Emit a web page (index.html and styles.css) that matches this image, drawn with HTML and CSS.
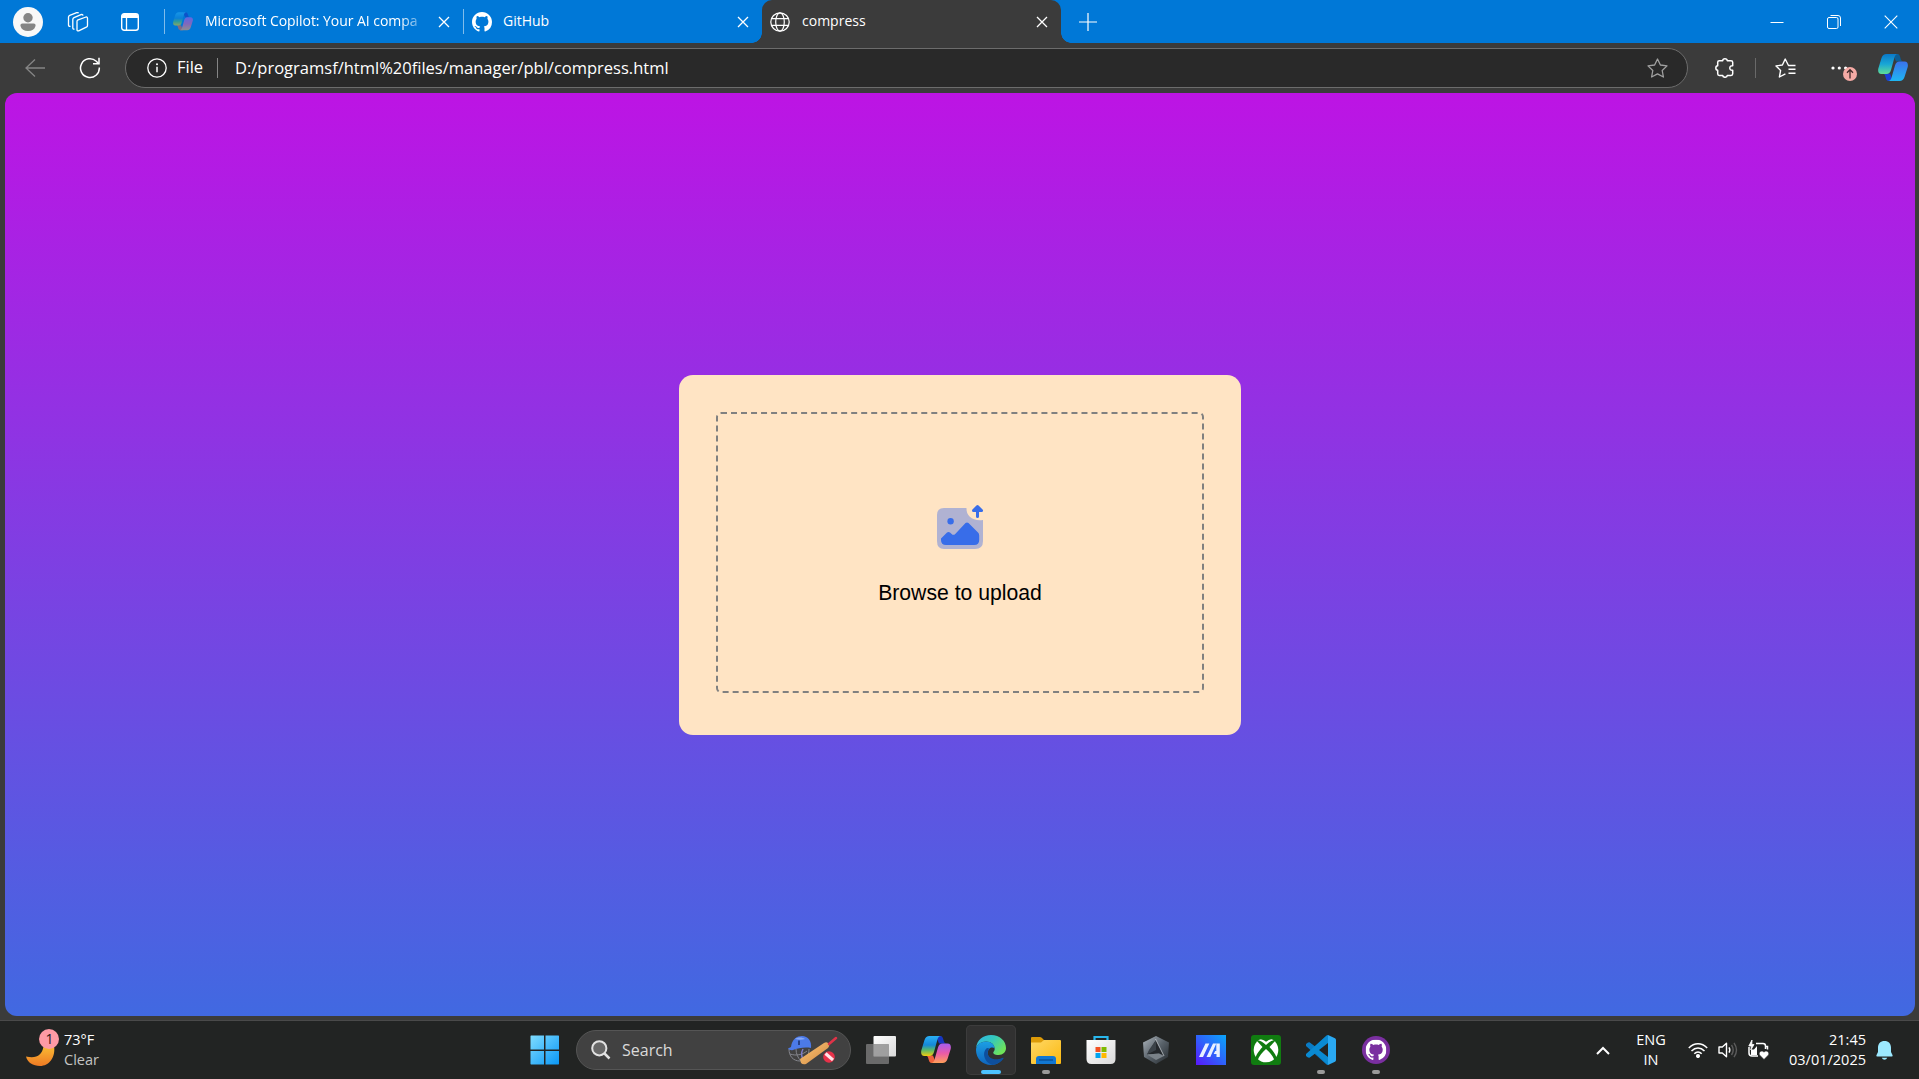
FILE: index.html
```
<!DOCTYPE html>
<html lang="en">
<head>
<meta charset="utf-8">
<title>compress</title>
<link rel="stylesheet" href="styles.css">
</head>
<body>
<svg class="defs" width="0" height="0" aria-hidden="true">
  <defs>
    <linearGradient id="cpA" x1="0" y1="0" x2="0" y2="1"><stop offset="0" stop-color="#2ab0f5"/><stop offset=".45" stop-color="#1588d8"/><stop offset=".7" stop-color="#58b96a"/><stop offset="1" stop-color="#f3cd0d"/></linearGradient>
    <linearGradient id="cpB" x1="0" y1="0" x2="0" y2="1"><stop offset="0" stop-color="#a65cf0"/><stop offset=".5" stop-color="#ea5aa8"/><stop offset="1" stop-color="#ff9f58"/></linearGradient>
    <linearGradient id="cbA" x1="0" y1="0" x2="0" y2="1"><stop offset="0" stop-color="#0a78c8"/><stop offset=".5" stop-color="#18a6d6"/><stop offset="1" stop-color="#5fdc97"/></linearGradient>
    <linearGradient id="cbB" x1="0" y1="0" x2="0" y2="1"><stop offset="0" stop-color="#3a72ee"/><stop offset="1" stop-color="#1fb6f2"/></linearGradient>
    <linearGradient id="win" x1="0" y1="0" x2="1" y2="1"><stop offset="0" stop-color="#7fdcff"/><stop offset="1" stop-color="#0a97f5"/></linearGradient>
    <linearGradient id="moon" x1="0" y1="0" x2="0" y2="1"><stop offset="0" stop-color="#f9bd34"/><stop offset="1" stop-color="#ee7a24"/></linearGradient>
    <linearGradient id="edA" x1="0" y1="0" x2="1" y2=".6"><stop offset="0" stop-color="#2fb4ec"/><stop offset=".5" stop-color="#34c8bd"/><stop offset="1" stop-color="#6fe35a"/></linearGradient>
    <linearGradient id="edB" x1="0" y1="0" x2="0" y2="1"><stop offset="0" stop-color="#1c9fe4"/><stop offset="1" stop-color="#0f64bd"/></linearGradient>
    <linearGradient id="fold" x1="0" y1="0" x2="1" y2="1"><stop offset="0" stop-color="#ffd866"/><stop offset="1" stop-color="#fbb910"/></linearGradient>
    <linearGradient id="asus" x1="0" y1="1" x2="1" y2="0"><stop offset="0" stop-color="#5a16fb"/><stop offset=".5" stop-color="#2e63fb"/><stop offset="1" stop-color="#0aa6fa"/></linearGradient>
    <linearGradient id="steel" x1="0" y1="0" x2="1" y2="1"><stop offset="0" stop-color="#aeb6bd"/><stop offset=".5" stop-color="#59626a"/><stop offset="1" stop-color="#23282c"/></linearGradient>
    <linearGradient id="white" x1="0" y1="0" x2="1" y2="1"><stop offset="0" stop-color="#fff"/><stop offset="1" stop-color="#d9d9d9"/></linearGradient>
    <linearGradient id="bat" x1="0" y1="0" x2="1" y2="1"><stop offset="0" stop-color="#ffc878"/><stop offset="1" stop-color="#cf8740"/></linearGradient>
    <symbol id="octocat" viewBox="0 0 16 16"><path d="M8 0C3.58 0 0 3.58 0 8c0 3.54 2.29 6.53 5.47 7.59.4.07.55-.17.55-.38 0-.19-.01-.82-.01-1.49-2.01.37-2.53-.49-2.69-.94-.09-.23-.48-.94-.82-1.13-.28-.15-.68-.52-.01-.53.63-.01 1.08.58 1.23.82.72 1.21 1.87.87 2.33.66.07-.52.28-.87.51-1.07-1.78-.2-3.64-.89-3.64-3.95 0-.87.31-1.59.82-2.15-.08-.2-.36-1.02.08-2.12 0 0 .67-.21 2.2.82.64-.18 1.32-.27 2-.27s1.36.09 2 .27c1.53-1.04 2.2-.82 2.2-.82.44 1.1.16 1.92.08 2.12.51.56.82 1.27.82 2.15 0 3.07-1.87 3.75-3.65 3.95.29.25.54.73.54 1.48 0 1.07-.01 1.93-.01 2.2 0 .21.15.46.55.38A8.01 8.01 0 0 0 16 8c0-4.42-3.58-8-8-8z"/></symbol>
    <symbol id="copilot" viewBox="0 0 30 28">
      <path d="M15 0h4c2.600 0 3 2 3.800 5 .4 1.600 1 2.500 3 2.500H18z" fill="#1636c0"/>
      <path d="M15 27h-4c-2.500 0-3-2-3.800-5-.4-1.500-1-2.500-3-2.500H12z" fill="#f0623c"/>
      <path d="M8.500 0H20c-2 0-3 1.500-3.700 4L13 16c-.8 2.800-2.200 4-4.500 4H3.500C.5 20-.3 17.500.3 14.500L3.500 4C4.400 1.300 6 0 8.500 0z" fill="url(#cpA)"/>
      <path d="M21.500 27H10c2 0 3-1.500 3.700-4L17 11.500c.8-2.800 2.200-4 4.500-4h5c3 0 3.800 2.500 3.200 5.500l-3.200 10c-.9 2.700-2.500 4-5 4z" fill="url(#cpB)"/>
    </symbol>
    <symbol id="copilot-blue" viewBox="0 0 30 28">
      <path d="M15 0h4c2.600 0 3 2 3.800 5 .4 1.600 1 2.500 3 2.500H18z" fill="#0c5c94"/>
      <path d="M15 27h-4c-2.500 0-3-2-3.800-5-.4-1.500-1-2.500-3-2.500H12z" fill="#1a3fd6"/>
      <path d="M8.500 0H20c-2 0-3 1.500-3.700 4L13 16c-.8 2.800-2.200 4-4.500 4H3.500C.5 20-.3 17.500.3 14.500L3.500 4C4.400 1.300 6 0 8.500 0z" fill="url(#cbA)"/>
      <path d="M21.500 27H10c2 0 3-1.500 3.700-4L17 11.500c.8-2.800 2.200-4 4.500-4h5c3 0 3.800 2.500 3.200 5.500l-3.200 10c-.9 2.700-2.500 4-5 4z" fill="url(#cbB)"/>
    </symbol>
    <symbol id="close" viewBox="0 0 12 12"><path d="M1 1l10 10M11 1L1 11" fill="none" stroke="#fff" stroke-width="1.300"/></symbol>
  </defs>
</svg>

<header class="tabstrip">
  <div class="strip-tools">
    <svg class="avatar" width="30" height="30" viewBox="0 0 30 30"><circle cx="15" cy="15" r="15" fill="#f8f8f8"/><circle cx="15" cy="10.700" r="4.700" fill="#858585"/><path d="M9.500 16.500h11q2.500 0 2 2.500c-.8 3.300-3.500 5-7.500 5s-6.700-1.700-7.500-5q-.5-2.500 2-2.500z" fill="#858585"/></svg>
    <svg class="workspaces" width="22" height="20" viewBox="0 0 22 20" fill="none" stroke="#fff" stroke-width="1.300" stroke-linejoin="round"><path d="M10.500 8.200L19 5q1.500-.3 1.500 1.200v7.300q0 1.200-1.200 1.700l-7.600 3.600q-1.700.5-1.700-1.100V9.500q0-.9.500-1.300z"/><path d="M7.500 17.200q-1.700.2-1.700-1.400V7.500q0-1.200 1.200-1.800L14 2.600q1.700-.4 2 1"/><path d="M3.500 14.400q-2 .2-2-1.400V5q0-1.200 1.200-1.700l7-2.600q1.300-.4 1.800.6"/></svg>
    <svg class="tabmenu" width="18" height="18" viewBox="0 0 18 18"><rect x=".7" y=".7" width="16.600" height="16.600" rx="2.500" fill="none" stroke="#fff" stroke-width="1.400"/><path d="M1 5V3q0-2 2-2h12q2 0 2 2v2z" fill="#fff"/><path d="M5.500 5v12" stroke="#fff" stroke-width="1.300"/></svg>
  </div>
  <div class="tab tab-copilot">
    <svg class="dim" width="20" height="19"><use href="#copilot"/></svg>
    <span class="tab-title fade">Microsoft Copilot: Your AI compa</span>
    <svg class="x" width="12" height="12"><use href="#close"/></svg>
  </div>
  <div class="tab tab-github">
    <svg width="20" height="20" fill="#fff"><use href="#octocat"/></svg>
    <span class="tab-title">GitHub</span>
    <svg class="x" width="12" height="12"><use href="#close"/></svg>
  </div>
  <div class="tab tab-active">
    <svg width="20" height="20" viewBox="0 0 20 20" fill="none" stroke="#fff" stroke-width="1.200"><circle cx="10" cy="10" r="9.200"/><ellipse cx="10" cy="10" rx="4.300" ry="9.200"/><path d="M1.500 6.700h17M1.500 13.300h17"/></svg>
    <span class="tab-title">compress</span>
    <svg class="x" width="12" height="12"><use href="#close"/></svg>
  </div>
  <svg class="plus" width="18" height="18" viewBox="0 0 18 18"><path d="M9 0v18M0 9h18" stroke="#fff" stroke-width="1.200"/></svg>
  <div class="window-buttons">
    <svg width="14" height="14" viewBox="0 0 14 14"><path d="M.5 7.500h13" stroke="#fff"/></svg>
    <svg width="14" height="14" viewBox="0 0 14 14" fill="none" stroke="#fff"><rect x=".5" y="2.500" width="10.500" height="11" rx="1.500"/><path d="M3.500.5H11q2.500 0 2.500 2.500v8"/></svg>
    <svg width="14" height="14" viewBox="0 0 14 14"><path d="M.7.700l12.600 12.600M13.300.700L.7 13.300" stroke="#fff" stroke-width="1.100"/></svg>
  </div>
</header>

<nav class="toolbar">
  <svg class="back" width="20" height="18" viewBox="0 0 20 18" fill="none" stroke="#858585" stroke-width="1.300"><path d="M10 .5L1 9l9 8.500M1 9h19"/></svg>
  <svg class="reload" width="22" height="22" viewBox="0 0 22 22" fill="none" stroke="#fff" stroke-width="1.500"><path d="M20.300 10.500A9.400 9.400 0 1 1 17.300 4.200L19.500 6.500"/><path d="M20 .8v6h-6"/></svg>
  <div class="address">
    <svg class="info" width="20" height="20" viewBox="0 0 20 20"><circle cx="10" cy="10" r="9.200" fill="none" stroke="#fff" stroke-width="1.300"/><path d="M10 8.800v5.500" stroke="#fff" stroke-width="1.500"/><circle cx="10" cy="6.200" r="1" fill="#fff"/></svg>
    <span class="scheme">File</span>
    <span class="url">D:/programsf/html%20files/manager/pbl/compress.html</span>
    <svg class="star" width="21" height="20" viewBox="0 0 21 20" fill="none" stroke="#a0a0a0" stroke-width="1.300" stroke-linejoin="round"><path d="M10.500 1l2.900 6 6.600.9-4.800 4.600 1.200 6.500-5.900-3.100L4.600 19l1.200-6.500L1 7.900 7.600 7z"/></svg>
  </div>
  <svg class="puzzle" width="20" height="20" viewBox="0 0 20 20" fill="none" stroke="#fff" stroke-width="1.500" stroke-linejoin="round"><path d="M4.300 2.700h3.400C7.800.2 12 .2 12.300 2.700H16q1.700 0 1.700 1.600v3.500c-3.800-.7-4 5.100 0 4.500v3.500q0 1.600-1.700 1.600h-3.700c-.3 2.500-4.500 2.500-4.600 0H4.300q-1.600 0-1.600-1.600v-3.500c-2.500-.2-2.500-4.300 0-4.500V4.300q0-1.600 1.600-1.600z"/></svg>
  <svg class="favorites" width="21" height="20" viewBox="0 0 21 20" fill="none" stroke="#fff" stroke-width="1.400" stroke-linejoin="round"><path d="M20.500 7.500h-7L10.200 1 7.400 7 1 7.900l4.600 4.500L4.400 19l6-3.200M13.500 11.200h7M13.500 15.200h7"/></svg>
  <div class="more">
    <svg width="18" height="4" viewBox="0 0 18 4" fill="#fff"><circle cx="2" cy="2" r="1.600"/><circle cx="8.300" cy="2" r="1.600"/><circle cx="14.600" cy="2" r="1.600"/></svg>
    <svg class="update" width="14" height="14" viewBox="0 0 14 14"><circle cx="7" cy="7" r="7" fill="#f5aaa5"/><path d="M7 11.500V3M4 5.700L7 2.700l3 3" fill="none" stroke="#402a2a" stroke-width="1.300"/></svg>
  </div>
  <svg class="sidebar-copilot" width="30" height="28"><use href="#copilot-blue"/></svg>
</nav>

<main class="page">
  <section class="card">
    <div class="dropzone">
      <svg width="48" height="46" viewBox="0 0 48 46">
        <path d="M8 4h22.500C30 12 37 17.500 47 16v21q0 8-8 8H8q-7 0-7-8V11q0-7 7-7z" fill="#b0b2d2"/>
        <circle cx="14.600" cy="17.300" r="3.200" fill="#386de9"/>
        <path d="M5 34.500l6-6q1.500-1 3 0l2.500 2.200q1.500.5 2.500-.5L29.500 19q1.500-1.200 3 0L42 28.500q1.200 1.200 1.200 3V36q0 5-5 5H10q-5 0-5-5z" fill="#386de9"/>
        <path d="M41.500 12.500V4M37.500 6.600l4-4 4 4z" fill="#386de9" stroke="#386de9" stroke-width="3" stroke-linejoin="round" stroke-linecap="round"/>
      </svg>
      <p class="prompt">Browse to upload</p>
    </div>
  </section>
</main>

<footer class="taskbar">
  <div class="weather">
    <svg width="34" height="42" viewBox="0 -2 34 42"><path d="M0 25.500c10 2.500 16-1 17.500-10l10.500-1c2 12-5 20.500-14 20.500C7 35 1.500 31.500 0 25.500z" fill="url(#moon)"/><circle cx="23" cy="8" r="10" fill="#ff9aa5"/><text x="23.500" y="13" class="badge-count">1</text></svg>
    <div class="weather-text"><span>73°F</span><span class="muted">Clear</span></div>
  </div>
  <div class="dock">
    <svg class="start" width="30" height="30" viewBox="0 0 30 30" fill="url(#win)"><path d="M1 .5h13v14H.5V1zM15.500.5h13l.5.500v13.500H15.500zM.5 16H14v13.500H1l-.5-.5zM15.500 16H29v13l-.5.500h-13z"/></svg>
    <div class="search">
      <svg width="20" height="20" viewBox="0 0 20 20" fill="none" stroke="#e2e2e2" stroke-width="2"><circle cx="8.300" cy="8.300" r="7.100" fill="#686868"/><path d="M13.500 13.500l5 5" stroke-width="2.500"/></svg>
      <span>Search</span>
      <svg class="cricket" width="50" height="30" viewBox="0 0 50 30"><path d="M1 14c0 7 4 12 11 12 5 0 9-4 9-12M2 19c6 2 12 1 17-3M8 14c0 5 2 9 5 12" fill="none" stroke="#84858c" stroke-width="1"/><path d="M15 14c-2 4-2 7 0 10" fill="none" stroke="#7c7cc8" stroke-width="1.500"/><path d="M0 13.500l3-1.500C4 4 9 1 14 1c6 0 10 5 9 12-6-1-13 0-18 2-2 .5-4 0-5-1.500z" fill="#4c7ae8"/><path d="M7 4c3-2 7-2 10 0-3 1-6 1-10 0z" fill="#86a8f8"/><path d="M11 5.500v4.500" stroke="#1b3270" stroke-width="1.600"/><path d="M12 24L36 8q3-2 5 1 1 2-1 4L18 29q-3 1-5-1z" fill="url(#bat)"/><path d="M41 9l7-6" stroke="#df3348" stroke-width="2.500" stroke-linecap="round"/><circle cx="41" cy="22" r="5.800" fill="#e83149"/><path d="M37.500 18.500l7.500 6.500" stroke="#ffe4e7" stroke-width="3"/></svg>
    </div>
    <div class="apps">
      <div class="app"><svg width="30" height="28" viewBox="0 0 30 28"><rect x="7.500" width="22.500" height="20.500" rx="1" fill="url(#white)"/><rect y="8" width="23" height="20" rx="1" fill="#777" opacity=".85"/><path d="M7.500 8H23v12.500H7.500z" fill="#aaa" opacity=".7"/></svg></div>
      <div class="app"><svg width="30" height="28"><use href="#copilot"/></svg></div>
      <div class="app selected"><svg width="30" height="30" viewBox="0 0 30 30"><path d="M0 13C1 5 7 0 15 0c9 0 15 6 15 13 0 4-3 7-7.500 7-4 0-6-1.500-5-3 .8-1 1.200-2 1.200-3C18.700 9.500 15 6.500 10 6.500 5 6.500 1.500 9.500 0 13z" fill="url(#edA)"/><path d="M0 15C0 10 4.500 6.500 10 6.500c5 0 8.500 3 8.700 7-2.200-2.500-7-.5-7 4.500 0 6 7 9.500 15.500 5C24.500 27.500 20 30 15 30 6.500 30 0 23.500 0 15z" fill="url(#edB)"/><path d="M11 13c-6 5-2 15 5.500 16.900C21 29.500 25 27 27.500 23.500c.3-.6 0-1-.8-.7-8 3.700-15 .2-15-4.800 0-2 .8-3.500 1.800-4.500z" fill="#0e4f9d"/></svg></div>
      <div class="app running"><svg width="30" height="28" viewBox="0 0 30 28"><path d="M0 2q0-1 1-1h8q1.500 0 2.500 1.500L13 4v4H0z" fill="#dd9b08"/><path d="M0 6.500h10L13 4h16q1 0 1 1v22q0 1-1 1H1q-1 0-1-1z" fill="url(#fold)"/><path d="M5 28v-5q0-3 3-3h14q3 0 3 3v5z" fill="#1278d2"/><path d="M8 24h14" stroke="#0a4e94" stroke-width="1.300"/></svg></div>
      <div class="app"><svg width="30" height="30" viewBox="0 0 30 30"><path d="M8.500 6V2h13v4" fill="none" stroke="#29b8ed" stroke-width="2.200"/><path d="M.5 5h29v19q0 5-5 5h-19q-5 0-5-5z" fill="url(#white)"/><path d="M9.500 12h5v5h-5z" fill="#f25022"/><path d="M15.500 12h5v5h-5z" fill="#7fba00"/><path d="M9.500 18h5v5h-5z" fill="#00a4ef"/><path d="M15.500 18h5v5h-5z" fill="#ffb900"/></svg></div>
      <div class="app"><svg width="26" height="28" viewBox="0 0 26 28"><path d="M13 0l13 6.500-1 14.500-12 7L1 21 0 6.500z" fill="url(#steel)"/><path d="M13 4l8 15.500-5-2L4 18.500z" fill="#24282c"/><path d="M13 4L6 14l-2 4.500 9-4.500z" fill="#3b4248"/><path d="M12.500 3L21 20" stroke="#c7cdd2" stroke-width=".8"/><path d="M4 18.500l12-1 5 2.500-8 4z" fill="#7a8289"/></svg></div>
      <div class="app"><svg width="30" height="30" viewBox="0 0 30 30"><path d="M0 0h30v30H0z" fill="url(#asus)"/><path d="M3 22L9.500 8.500h3.800L7 22zM10.500 22L17 8.500h3.300L14.300 22zM20.300 8.500h3.500V22h-3.300v-3h-2.800l1.500-3h1.100z" fill="#e8f0ff"/></svg></div>
      <div class="app"><svg width="30" height="30" viewBox="0 0 30 30"><rect width="30" height="30" rx="3" fill="#107c10"/><circle cx="15" cy="15" r="12.300" fill="#fff"/><path d="M7 4.500c3-.8 6 .8 8 2.300 2-1.500 5-3.100 8-2.300l-1.500-2.500h-13z" fill="#107c10"/><path d="M5.500 5.500c3-.8 6.500 1.700 9.500 4.500 3-2.800 6.500-5.300 9.500-4.500l-6 6.500c4 4.500 7.500 9 7 12.500l-2 1C22 21 18.500 17 15 14c-3.500 3-7 7-8.500 11.500l-2-1c-.5-3.500 3-8 7-12.500z" fill="#107c10"/></svg></div>
      <div class="app running"><svg width="30" height="30" viewBox="0 0 30 30"><path d="M22 0L9.500 11.800 3.500 7.200 2 7.400 0 9v2l20.500 18.500L22 30z" fill="#0a7bc4"/><path d="M22 30L9.500 18.200l-6 4.600-1.500-.2L0 21v-2L20.500.5 22 0z" fill="#0a8ad2"/><path d="M22 8v14l-9-7z" fill="#222423"/><path d="M22 0l7 3.300q1 .5 1 1.700v20q0 1.200-1 1.700L22 30z" fill="#2aa9f2"/></svg></div>
      <div class="app running"><svg width="28" height="28" viewBox="0 0 28 28"><circle cx="14" cy="14" r="14" fill="#7a2fa0"/><svg x="3.500" y="3.500" width="21" height="21" fill="#fff"><use href="#octocat"/></svg></svg></div>
    </div>
  </div>
  <div class="tray">
    <svg class="chevron" width="14" height="9" viewBox="0 0 14 9"><path d="M1 8l6-6 6 6" fill="none" stroke="#fff" stroke-width="2"/></svg>
    <div class="lang"><span>ENG</span><span>IN</span></div>
    <svg class="wifi" width="20" height="16" viewBox="0 0 20 16" fill="none" stroke="#fff" stroke-width="1.500"><path d="M.8 6c5.500-5.600 12.900-5.600 18.400 0M3.500 9c3.900-4 9.100-4 13 0M6.300 11.800c2.200-2.400 5.200-2.400 7.400 0"/><circle cx="10" cy="14" r="1.300" fill="#fff"/></svg>
    <svg class="volume" width="20" height="18" viewBox="0 0 20 18" fill="none" stroke="#fff" stroke-width="1.400"><path d="M1 6h3.300L8.500 2.200v13.600L4.300 12H1z" stroke-linejoin="round"/><path d="M11 6.300q1.700 2.700 0 5.400"/><path d="M13.500 4q3.400 5 0 10M16 1.800q5 7.200 0 14.400" stroke="#5c5c5c"/></svg>
    <svg class="battery" width="21" height="20" viewBox="0 0 21 20" fill="none" stroke="#fff" stroke-width="1.500"><path d="M8 3.500h7q2.500 0 2.500 2.500v3M1 7v6q0 3 3 3h6M17 6.500h2.500v3"/><path d="M3 15V9.500h3L9 6v9z" fill="#fff" stroke="none"/><path d="M4 0L.8 6h2.600L2.800 10 6 4.500H3.800z" fill="#fff" stroke="#fff" stroke-width=".8"/><path d="M16 19.500l-4.500-4.600c-1.500-2.500 2.500-5.500 4.500-2.700 2-2.800 6 .2 4.500 2.700z" fill="#fff" stroke="#222" stroke-width=".6"/></svg>
    <div class="clock"><span>21:45</span><span>03/01/2025</span></div>
    <svg class="bell" width="17" height="19" viewBox="0 0 17 19" fill="#9ce9ff"><path d="M8.500 0c4 0 6.500 2.700 6.500 6.500v4.500l1.600 3.300q.3 1.200-.9 1.200H1.300q-1.200 0-.9-1.200L2 11V6.500C2 2.700 4.500 0 8.500 0zM5.700 16.700h5.600q-1 2-2.800 2t-2.800-2z"/></svg>
  </div>
</footer>
</body>
</html>
```
FILE: styles.css
```
* { box-sizing: border-box; }

body {
  margin: 0;
  width: 1919px;
  height: 1079px;
  display: flex;
  flex-direction: column;
  overflow: hidden;
  background: #3b3b3b;
  color: #fff;
  font-family: "Open Sans", "Noto Sans", sans-serif;
}

svg { display: block; flex: none; }
.defs { position: absolute; }

/* Tab strip */
.tabstrip {
  height: 43px;
  flex: none;
  display: flex;
  align-items: center;
  background: #0078d7;
}
.strip-tools {
  display: flex;
  align-items: center;
  width: 164px;
  padding-left: 13px;
}
.workspaces { margin-left: 24px; }
.tabmenu { margin-left: 32px; }
.tab {
  display: flex;
  align-items: center;
  height: 43px;
  font-size: 14px;
}
.tab-title {
  flex: 1;
  margin-left: 12px;
  padding-bottom: 2px;
  white-space: nowrap;
}
.tab-copilot, .tab-github {
  background: linear-gradient(#80bceb, #80bceb) left center / 1px 25px no-repeat;
}
.tab-copilot { width: 299px; padding: 0 13px 0 9px; }
.tab-github { width: 299px; padding: 0 13px 0 9px; }
.tab-github .tab-title { margin-left: 11px; }
.tab-active {
  position: relative;
  width: 299px;
  padding: 0 13px 0 8px;
  background: #3b3b3b;
  border-radius: 10px 10px 0 0;
}
.tab-active::before, .tab-active::after {
  content: "";
  position: absolute;
  bottom: 0;
  width: 10px;
  height: 10px;
}
.tab-active::before {
  left: -10px;
  background: radial-gradient(circle at 0 0, transparent 9.500px, #3b3b3b 10px);
}
.tab-active::after {
  right: -10px;
  background: radial-gradient(circle at 100% 0, transparent 9.500px, #3b3b3b 10px);
}
.dim { opacity: .55; }
.fade {
  letter-spacing: -0.05px;
  -webkit-mask-image: linear-gradient(90deg, #000 195px, transparent 224px);
  mask-image: linear-gradient(90deg, #000 195px, transparent 224px);
}
.x { margin-left: 9px; }
.plus { margin-left: 18px; }
.window-buttons {
  display: flex;
  gap: 43px;
  margin-left: auto;
  padding-right: 21px;
}

/* Toolbar */
.toolbar {
  height: 50px;
  flex: none;
  display: flex;
  align-items: center;
  background: #3b3b3b;
}
.back { margin-left: 25px; }
.reload { margin-left: 34px; }
.address {
  display: flex;
  align-items: center;
  width: 1563px;
  height: 40px;
  margin-left: 24px;
  padding: 0 19px 0 21px;
  border: 1px solid #6c6c6c;
  border-radius: 20px;
  background: #292929;
  font-size: 16.500px;
}
.scheme {
  width: 41px;
  height: 20px;
  line-height: 18px;
  margin-left: 10px;
  border-right: 1px solid #858585;
}
.url {
  margin-left: 17px;
  padding-bottom: 2px;
}
.star { margin-left: auto; }
.puzzle { margin-left: 27px; }
.favorites {
  box-sizing: content-box;
  margin-left: 20px;
  padding-left: 19px;
  border-left: 1px solid #696969;
}
.more {
  position: relative;
  width: 24px;
  margin-left: 35px;
}
.update { position: absolute; left: 12px; top: 1px; }
.sidebar-copilot { margin-left: 23px; }

/* Page */
.page {
  flex: none;
  display: flex;
  align-items: center;
  justify-content: center;
  width: 1910px;
  height: 923px;
  margin-left: 5px;
  border-radius: 12px;
  background: linear-gradient(#bd14e4, #4169e1);
}
.card {
  width: 562px;
  height: 360px;
  padding: 37px;
  border-radius: 14px;
  background: #ffe4c4;
}
.dropzone {
  display: flex;
  flex-direction: column;
  align-items: center;
  height: 281px;
  padding-top: 90px;
  border: 2px dashed #808080;
  border-radius: 5px;
  color: #000;
  font-family: "Liberation Sans", Arial, sans-serif;
}
.prompt {
  margin: 30px 0 0;
  font-size: 21.200px;
  line-height: 25px;
}

/* Taskbar */
.taskbar {
  height: 59px;
  flex: none;
  display: flex;
  align-items: center;
  margin-top: 4px;
  border-top: 1px solid #4a4a4a;
  background: #222423;
  font-size: 14.500px;
}
.weather {
  display: flex;
  align-items: center;
  width: 530px;
  padding-left: 26px;
}
.badge-count {
  font-size: 14px;
  fill: #27171a;
  text-anchor: middle;
}
.weather-text, .lang, .clock {
  display: flex;
  flex-direction: column;
  line-height: 20px;
}
.weather-text { margin-left: 4px; }
.muted { color: #c4c4c4; }
.dock { display: flex; align-items: center; }
.search {
  display: flex;
  align-items: center;
  width: 275px;
  height: 40px;
  margin-left: 16px;
  padding: 0 12px 0 14px;
  border: 1px solid #555;
  border-radius: 20px;
  background: #414141;
  color: #dadada;
  font-size: 16px;
}
.search span { margin-left: 11px; }
.cricket { margin-left: auto; }
.apps { display: flex; gap: 5px; margin-left: 5px; }
.app {
  position: relative;
  display: flex;
  align-items: center;
  justify-content: center;
  width: 50px;
  height: 50px;
  border-radius: 5px;
}
.selected { background: #313131; box-shadow: inset 0 0 0 1px #3c3c3c; }
.selected::after, .running::after {
  content: "";
  position: absolute;
  bottom: 1px;
  width: 8px;
  height: 4px;
  border-radius: 2px;
  background: #9a9a9a;
}
.selected::after { width: 20px; background: #4cc2ff; }
.tray {
  display: flex;
  align-items: center;
  margin-left: auto;
  padding-right: 26px;
}
.lang { width: 44px; margin-left: 19px; text-align: center; }
.wifi { margin-left: 15px; }
.volume { margin-left: 10px; }
.battery { margin-left: 10px; }
.clock { width: 84px; margin-left: 13px; text-align: right; }
.bell { margin-left: 10px; }
```
